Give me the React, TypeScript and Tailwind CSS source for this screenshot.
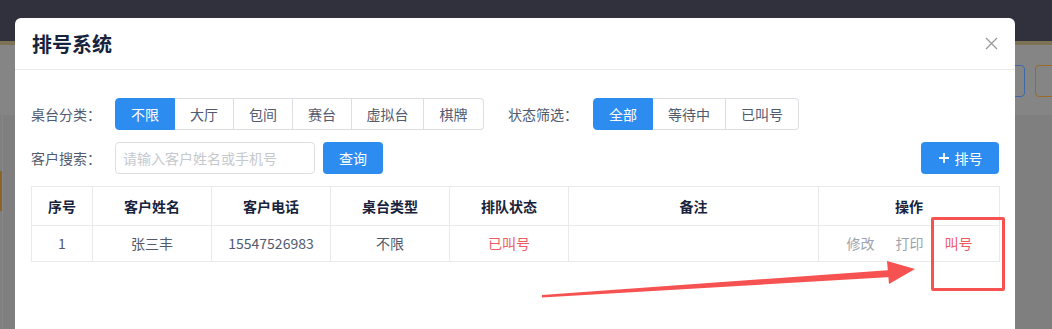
import { useState } from 'react';

const typeTabs = [
    { label: '不限', w: 'w-[60px]' },
    { label: '大厅', w: 'w-[59px]' },
    { label: '包间', w: 'w-[59px]' },
    { label: '赛台', w: 'w-[59px]' },
    { label: '虚拟台', w: 'w-[72px]' },
    { label: '棋牌', w: 'w-[60px]' },
];

const statusTabs = [
    { label: '全部', w: 'w-[60px]' },
    { label: '等待中', w: 'w-[73px]' },
    { label: '已叫号', w: 'w-[73px]' },
];

const columns = [
    { title: '序号', w: 'w-[61px]' },
    { title: '客户姓名', w: 'w-[119px]' },
    { title: '客户电话', w: 'w-[119px]' },
    { title: '桌台类型', w: 'w-[119px]' },
    { title: '排队状态', w: 'w-[119px]' },
    { title: '备注', w: 'w-[250px]' },
    { title: '操作', w: 'w-[181px]' },
];

type TabGroupProps = {
    tabs: { label: string; w: string }[];
    active: number;
    onChange: (i: number) => void;
};

function TabGroup({ tabs, active, onChange }: TabGroupProps) {
    return (
        <div className="flex h-[32px]">
            {tabs.map((t, i) => (
                <button
                    key={t.label}
                    onClick={() => onChange(i)}
                    className={`${t.w} h-[32px] flex items-center justify-center text-[14px] border-y border-r ${i === 0 ? 'border-l rounded-l-[4px]' : ''} ${i === tabs.length - 1 ? 'rounded-r-[4px]' : ''} ${
                        i === active
                            ? 'bg-[#2d8cf0] border-[#2d8cf0] text-white'
                            : 'bg-white border-[#dcdee2] text-[#515a6e]'
                    }`}
                >
                    {t.label}
                </button>
            ))}
        </div>
    );
}

export default function App() {
    const [typeIdx, setTypeIdx] = useState(0);
    const [statusIdx, setStatusIdx] = useState(0);
    const [keyword, setKeyword] = useState('');

    return (
        <div className="relative w-[1052px] h-[329px] overflow-hidden bg-[#7f7f7f] font-['Noto_Sans_CJK_SC','Liberation_Sans',sans-serif]">
            {/* dimmed page behind the dialog */}
            <div className="h-[41px] bg-[#31313d]" />
            <div className="h-[4px] bg-[#7d7156]" />
            <div className="h-[70px] bg-[#858585] flex items-start pt-[20px] justify-end gap-[10px] pr-[-20px]">
                <div className="w-[60px] h-[32px] border border-[#3d6aa6] rounded-[4px]" />
                <div className="w-[60px] h-[32px] border border-[#9a6a2a] rounded-[4px] mr-[-43px]" />
            </div>
            <div className="flex h-[214px]">
                <div className="w-[3px] pt-[56px] border-r border-[#878787]">
                    <div className="h-[40px] bg-[#8a6426]" />
                </div>
            </div>

            {/* dialog */}
            <div className="absolute left-[15px] top-[18px] w-[1000px] h-[330px] bg-white rounded-t-[6px]">
                <div className="h-[52px] flex items-center justify-between px-[17px] border-b border-[#e8eaec]">
                    <span className="text-[20px] font-bold text-[#17233d]">排号系统</span>
                    <svg width="13" height="13" viewBox="0 0 13 13" className="mr-[0px]">
                        <path d="M1 1 L12 12 M12 1 L1 12" stroke="#999" strokeWidth="1.3" fill="none" />
                    </svg>
                </div>

                <div className="px-[16px] pt-[28px]">
                    <div className="flex items-center h-[32px]">
                        <span className="w-[84px] text-[14px] text-[#515a6e]">桌台分类：</span>
                        <TabGroup tabs={typeTabs} active={typeIdx} onChange={setTypeIdx} />
                        <span className="ml-[24px] w-[85px] text-[14px] text-[#515a6e]">状态筛选：</span>
                        <TabGroup tabs={statusTabs} active={statusIdx} onChange={setStatusIdx} />
                    </div>

                    <div className="flex items-center h-[32px] mt-[12px]">
                        <span className="w-[84px] text-[14px] text-[#515a6e]">客户搜索：</span>
                        <input
                            className="w-[200px] h-[32px] border border-[#dcdee2] rounded-[4px] px-[7px] text-[14px] text-[#515a6e] placeholder:text-[#c5c8ce] outline-none"
                            placeholder="请输入客户姓名或手机号"
                            value={keyword}
                            onChange={(e) => setKeyword(e.target.value)}
                        />
                        <button className="ml-[8px] w-[60px] h-[32px] rounded-[4px] bg-[#2d8cf0] text-white text-[14px]">查询</button>
                        <button className="ml-auto w-[78px] h-[32px] rounded-[4px] bg-[#2d8cf0] text-white text-[14px] flex items-center justify-center gap-[5px]">
                            <svg width="12" height="12" viewBox="0 0 12 12">
                                <path d="M6 1 V11 M1 6 H11" stroke="#fff" strokeWidth="1.8" fill="none" />
                            </svg>
                            排号
                        </button>
                    </div>

                    <table className="mt-[12px] w-[968px] border-collapse table-fixed text-[14px]">
                        <thead>
                            <tr className="h-[39px]">
                                {columns.map((c) => (
                                    <th key={c.title} className={`${c.w} border border-[#e8eaec] font-bold text-[#17233d] text-center`}>
                                        {c.title}
                                    </th>
                                ))}
                            </tr>
                        </thead>
                        <tbody>
                            <tr className="h-[36px] text-[#515a6e] text-center">
                                <td className="border border-[#e8eaec]">1</td>
                                <td className="border border-[#e8eaec]">张三丰</td>
                                <td className="border border-[#e8eaec]">15547526983</td>
                                <td className="border border-[#e8eaec]">不限</td>
                                <td className="border border-[#e8eaec] text-[#ef5a62]">已叫号</td>
                                <td className="border border-[#e8eaec]"></td>
                                <td className="border border-[#e8eaec]">
                                    <div className="flex justify-center gap-[21px] pl-[1px]">
                                        <span className="text-[#9ea3ad]">修改</span>
                                        <span className="text-[#9ea3ad]">打印</span>
                                        <span className="text-[#ef5a62]">叫号</span>
                                    </div>
                                </td>
                            </tr>
                        </tbody>
                    </table>
                </div>
            </div>

            {/* red annotation */}
            <div className="absolute left-[931px] top-[217px] w-[74px] h-[74px] border-[3px] border-[#f65252] rounded-[2px]" />
            <svg className="absolute left-0 top-0" width="1052" height="329" viewBox="0 0 1052 329">
                <polygon points="542,295 891,270 891,277 542,297.5" fill="#f65252" />
                <polygon points="887,261 915,269 889,284" fill="#f65252" />
            </svg>
        </div>
    );
}
